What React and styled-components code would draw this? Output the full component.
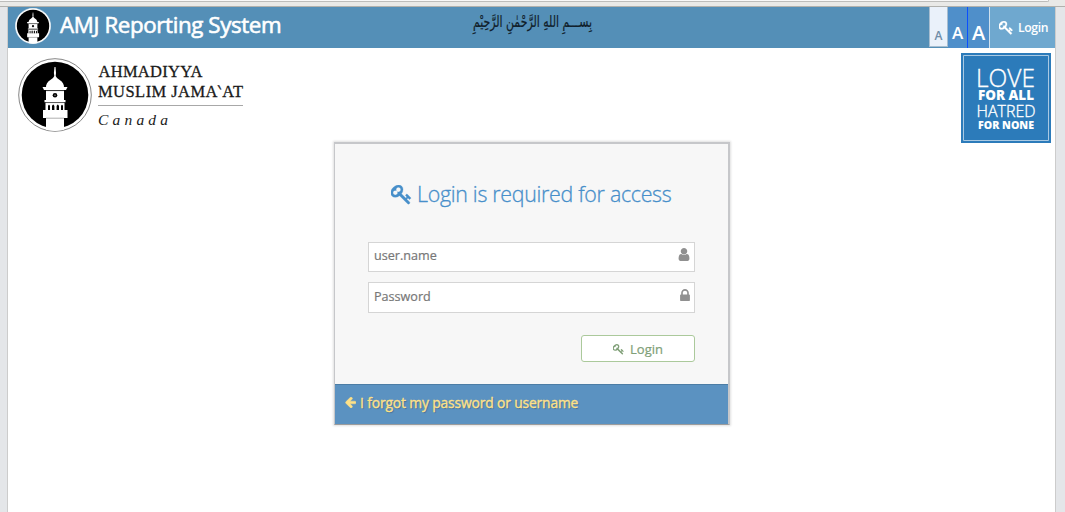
import React from "react";
import styled, { createGlobalStyle } from "styled-components";

const GlobalStyle = createGlobalStyle`
  *, *::before, *::after { box-sizing: border-box; }
  html, body { margin: 0; height: 512px; overflow: hidden; background: #e4e6e9; }
  body { font-family: "Open Sans", sans-serif; font-size: 13px; }
`;

const Page = styled.div`
  height: 512px;
  display: flex;
  flex-direction: column;
`;

const BrowserEdge = styled.div`
  height: 7px;
  flex: none;
  background: #e9e9e7;
  border-bottom: 1px solid #b1b1ad;
`;

const AddressBar = styled.div`
  width: 1049px;
  height: 2px;
  background: #f8f8f8;
  border-bottom: 1px solid #bdbdbb;
  border-right: 1px solid #bdbdbb;
  border-radius: 0 0 2px 0;
`;

const Container = styled.div`
  flex: 1;
  margin: 0 9px 0 7px;
  border: solid #cccccc;
  border-width: 0 1px;
  background: #fff;
`;

const Navbar = styled.header`
  height: 41px;
  display: flex;
  background: #548fb7;
  color: #fff;
`;

const Brand = styled.div`
  width: 461px;
  display: flex;
  align-items: flex-start;
  padding-left: 7px;
`;

const BrandName = styled.span`
  margin-left: 9px;
  font-size: 22.3px;
  line-height: 36px;
  letter-spacing: -0.37px;
  white-space: nowrap;
  -webkit-text-stroke: 0.6px #fff;
`;

const NavActions = styled.nav`
  display: flex;
  margin-left: auto;
  align-items: flex-start;
`;

const SizeButton = styled.button`
  width: ${(p) => p.$width}px;
  height: ${(p) => p.$height || 41}px;
  padding: 0 0 ${(p) => p.$drop}px;
  border-style: solid;
  border-color: ${(p) => p.$edge || "transparent"};
  border-width: ${(p) => p.$borders || "0"};
  display: flex;
  align-items: flex-end;
  justify-content: center;
  background: ${(p) => p.$bg || "#4f8fca"};
  color: ${(p) => p.$color || "#fff"};
  font: 600 ${(p) => p.$size}px/1 "Open Sans", sans-serif;
`;

const NavLogin = styled.a`
  width: 65px;
  height: 41px;
  display: flex;
  align-items: center;
  padding-left: 9px;
  gap: 5px;
  background: #6fa8cf;
  font-size: 12.2px;
  font-weight: 600;
  letter-spacing: -0.35px;
`;

const Banner = styled.section`
  height: 94px;
  display: flex;
  justify-content: space-between;
  padding: 5px 4px 0 10px;
`;

const Organisation = styled.div`
  display: flex;
  padding-top: 5px;
  gap: 6px;
`;

const Panel = styled.main`
  width: 396px;
  height: 283px;
  margin-left: 326px;
  display: flex;
  flex-direction: column;
  border: 1px solid #c6c7ca;
  border-width: 2px 2px 1px 1px;
  border-bottom-color: #9c9c9c;
  background: #f7f7f7;
  box-shadow: 0 0 2px 1px rgba(0, 0, 0, 0.12);
`;

const PanelBody = styled.form`
  flex: 1;
  padding: 35px 33px 0;
  display: flex;
  flex-direction: column;
`;

const PanelTitle = styled.h1`
  margin: 0 0 33px;
  height: 30px;
  display: flex;
  align-items: center;
  padding-left: 23px;
  gap: 5px;
  color: #478fca;
  font-size: 21.4px;
  font-weight: 300;
  line-height: 30px;
  letter-spacing: -0.3px;
  white-space: nowrap;
  -webkit-text-stroke: 0.3px #478fca;

  svg { margin-top: 2px; }
`;

const Field = styled.label`
  height: ${(p) => p.$height}px;
  margin-bottom: 10px;
  padding: 0 4px 3px 5px;
  display: flex;
  align-items: center;
  justify-content: space-between;
  border: 1px solid #d5d5d5;
  background: #fff;
  color: #777;
  font-size: 12.6px;
  -webkit-text-stroke: 0.2px #777;

  svg { margin-bottom: 2px; }
`;

const LoginButton = styled.button`
  width: 114px;
  height: 27px;
  margin-top: 12px;
  padding: 1px 0 0 0;
  align-self: flex-end;
  display: flex;
  align-items: center;
  justify-content: center;
  gap: 6px;
  border: 1px solid #abc99b;
  border-radius: 3px;
  background: #fff;
  color: #80a078;
  font: 13px/25px "Open Sans", sans-serif;
  -webkit-text-stroke: 0.2px #80a078;
`;

const PanelFooter = styled.footer`
  height: 40px;
  padding: 0 0 4px 10px;
  display: flex;
  align-items: center;
  gap: 4px;
  border-top: 1px solid #4c7da5;
  background: #5b92c1;
  color: #fee188;
  font-size: 13.8px;
  line-height: 19px;
  letter-spacing: -0.12px;
  text-shadow: 1px 1px 1px rgba(0, 0, 0, 0.25);
  -webkit-text-stroke: 0.35px #fee188;
`;

const FooterLink = styled.a`
  margin-top: -1px;
`;

const ICONS = {
  key: "M832 512q0-80-56-136t-136-56-136 56-56 136q0 42 19 83-41-19-83-19-80 0-136 56t-56 136 56 136 136 56 136-56 56-136q0-42-19-83 41 19 83 19 80 0 136-56t56-136zm851 704q0 17-49 66t-66 49q-9 0-28.5-16t-36.5-33-38.5-40-24.5-26l-96 96 220 220q28 28 28 68 0 42-39 81t-81 39q-40 0-68-28l-671-671q-176 131-365 131-163 0-265.5-102.5t-102.5-265.5q0-160 95-313t248-248 313-95q163 0 265.5 102.5t102.5 265.5q0 189-131 365l355 355 96-96q-3-3-26-24.5t-40-38.5-33-36.5-16-28.5q0-17 49-66t66-49q13 0 23 10 6 6 46 44.5t82 79.5 86.5 86 73 78 28.5 41z",
  user: "M1536 1399q0 109-62.5 187t-150.5 78h-854q-88 0-150.5-78t-62.5-187q0-85 8.5-160.5t31.5-152 58.5-131 94-89 134.5-34.5q131 128 313 128t313-128q76 0 134.5 34.5t94 89 58.5 131 31.5 152 8.5 160.5zm-256-887q0 159-112.5 271.5t-271.5 112.5-271.5-112.5-112.5-271.5 112.5-271.5 271.5-112.5 271.5 112.5 112.5 271.5z",
  lock: "M640 768h512v-192q0-106-75-181t-181-75-181 75-75 181v192zm832 96v576q0 40-28 68t-68 28h-960q-40 0-68-28t-28-68v-576q0-40 28-68t68-28h32v-192q0-184 132-316t316-132 316 132 132 316v192h32q40 0 68 28t28 68z",
  arrow: "M1664 896v128q0 53-32.5 90.5t-84.5 37.5h-704l293 294q38 36 38 90t-38 90l-75 76q-37 37-90 37-52 0-91-37l-651-652q-37-37-37-90 0-52 37-91l651-650q38-38 91-38 52 0 90 38l75 74q38 38 38 91t-38 91l-293 293h704q52 0 84.5 37.5t32.5 90.5z",
};

const BOXES = {
  key: "64 128 1664 1664",
  user: "256 128 1280 1536",
  lock: "320 128 1152 1408",
  arrow: "128 180 1536 1560",
};

const Glyph = styled.svg`
  flex: none;
  fill: ${(p) => p.$color || "currentColor"};
`;

function Icon({ name, width, height, color, weight = 0 }) {
  return (
    <Glyph width={width} height={height} viewBox={BOXES[name]} $color={color}>
      <path d={ICONS[name]} stroke="currentColor" strokeWidth={weight} />
    </Glyph>
  );
}

function Minaret({ size, ring, clip }) {
  return (
    <svg width={size} height={size} viewBox="0 0 74 74">
      <defs>
        <clipPath id={clip}>
          <circle cx="37" cy="37" r="36" />
        </clipPath>
      </defs>
      <circle cx="37" cy="37" r="36.3" fill="#fff" stroke={ring} strokeWidth="0.9" />
      <circle cx="37" cy="37" r="33.3" fill="#000" />
      <g clipPath={`url(#${clip})`} fill="#fff">
        <path d="M36.500 9h1l.5 6-.3 3c1 2 2 2.600 4 4 3 2 4.600 4.500 4.300 8H28c-.3-3.500 1.300-6 4.300-8 2-1.400 3-2 4-4l-.4-3z" />
        <path d="M24.500 29h25l-1.500 3H26z" />
        <path d="M28 33h18v9H28z" />
        <path d="M26.500 42h21v2.300h-21z" />
        <path d="M27.500 45h19v8h-19z" />
        <path d="M25 52h24.500v8H25z" />
        <path d="M28 60h18v14H28z" />
      </g>
      <path d="M28 32.700h18M28 44.600h18M28 60.200h18" stroke="#777" strokeWidth="0.6" />
      <circle cx="37" cy="37.300" r="2.300" fill="#000" />
      <circle cx="37" cy="37.300" r="0.7" fill="#999" />
      <path
        d="M30 52v-4q1-2.500 2 0v4zM34 52v-4q1.200-3 2.400 0v4zM38.600 52v-4q1.200-3 2.400 0v4zM43 52v-4q1-2.500 2 0v4z"
        fill="#000"
      />
    </svg>
  );
}

const BrandMark = styled.div`
  height: 38px;
  padding-top: 1px;
`;

function OrganisationName() {
  return (
    <svg width="148" height="74" fill="#1a1a1a" fontFamily="Liberation Serif, serif">
      <g stroke="#1a1a1a" strokeWidth="0.3">
        <text x="0.500" y="19" fontSize="16.500" textLength="104">AHMADIYYA</text>
        <text x="0" y="38.500" fontSize="16.500" textLength="145">MUSLIM JAMA‵AT</text>
      </g>
      <path d="M0 47.500h145" stroke="#a8a8a8" />
      <text x="0" y="67" fontSize="15.500" fontStyle="italic" textLength="70">Canada</text>
    </svg>
  );
}

function Motto() {
  return (
    <svg width="90" height="90" fill="#fff" fontFamily="Open Sans, sans-serif">
      <path d="M0 0h90v90H0z" fill="#2c7bba" />
      <path d="M2.500 2.500h85v85h-85z" fill="none" stroke="#a9c9e3" />
      <g stroke="#fff" strokeWidth="0.35">
        <text x="15" y="33.500" fontSize="26.500" fontWeight="300" textLength="59" lengthAdjust="spacingAndGlyphs">LOVE</text>
        <text x="15.500" y="63.500" fontSize="17" fontWeight="300" textLength="59" lengthAdjust="spacingAndGlyphs">HATRED</text>
      </g>
      <text x="17" y="46.500" fontSize="13.300" fontWeight="800" textLength="56" lengthAdjust="spacingAndGlyphs">FOR ALL</text>
      <text x="17" y="76" fontSize="11.300" fontWeight="800" textLength="56" lengthAdjust="spacingAndGlyphs">FOR NONE</text>
    </svg>
  );
}

const Invocation = styled.svg`
  overflow: visible;
`;

function Bismillah() {
  return (
    <Invocation width="128" height="38" viewBox="0 0 128 38">
      <text
        x="63.500"
        y="20"
        textAnchor="middle"
        direction="rtl"
        fill="#10202a"
        stroke="#10202a"
        strokeWidth="0.2"
        fontFamily="DejaVu Sans, sans-serif"
        fontSize="16"
        textLength="119"
        lengthAdjust="spacingAndGlyphs"
      >
        بِســـمِ اللهِ الرَّحْمٰنِ الرَّحِيْمِ
      </text>
    </Invocation>
  );
}

export default function App() {
  return (
    <Page>
      <GlobalStyle />
      <BrowserEdge>
        <AddressBar />
      </BrowserEdge>
      <Container>
        <Navbar>
          <Brand>
            <BrandMark>
              <Minaret size={36} ring="#fff" clip="navMark" />
            </BrandMark>
            <BrandName>AMJ Reporting System</BrandName>
          </Brand>
          <Bismillah />
          <NavActions>
            <SizeButton $width={19} $height={40} $size={12} $drop={4} $bg="#eaf1fa" $color="#6f8da8" $edge="#a7bdcf" $borders="0 1px 1px 1px">A</SizeButton>
            <SizeButton $width={19} $size={17} $drop={7}>A</SizeButton>
            <SizeButton $width={23} $size={20} $drop={5} $edge="transparent #cfe0ee transparent #0b4fff" $borders="0 1px">A</SizeButton>
            <NavLogin>
              <Icon name="key" width={14} height={14} weight={30} />
              Login
            </NavLogin>
          </NavActions>
        </Navbar>
        <Banner>
          <Organisation>
            <Minaret size={74} ring="#777" clip="bannerMark" />
            <OrganisationName />
          </Organisation>
          <Motto />
        </Banner>
        <Panel>
          <PanelBody>
            <PanelTitle>
              <Icon name="key" width={21} height={20} weight={25} />
              Login is required for access
            </PanelTitle>
            <Field $height={30}>
              user.name
              <Icon name="user" width={12} height={13} color="#909090" />
            </Field>
            <Field $height={31}>
              Password
              <Icon name="lock" width={10} height={12} color="#909090" />
            </Field>
            <LoginButton type="button">
              <Icon name="key" width={11} height={11} />
              Login
            </LoginButton>
          </PanelBody>
          <PanelFooter>
            <Icon name="arrow" width={11} height={11} weight={60} />
            <FooterLink>I forgot my password or username</FooterLink>
          </PanelFooter>
        </Panel>
      </Container>
    </Page>
  );
}
